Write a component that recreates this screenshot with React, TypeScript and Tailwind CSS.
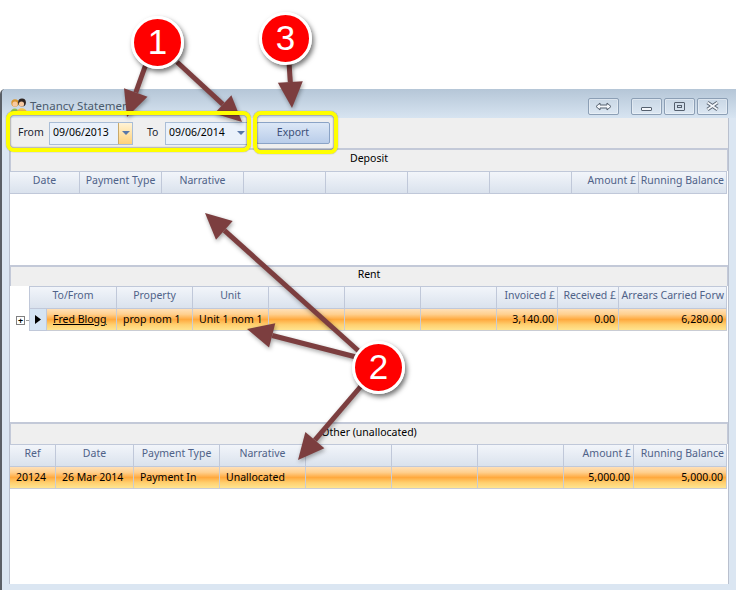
const headBg = "bg-[linear-gradient(#f2f5fa,#dae2ed)]";
const rowBg = "bg-[linear-gradient(#ffe0b8,#ffd08f_25%,#ffa93e_50%,#ffd070_75%,#ffe48f)]";

type Col = { w: string; headW?: string; label: string; value?: string; align?: string };

const deposit: Col[] = [
  { w: "w-[70px]", label: "Date" },
  { w: "w-[82px]", label: "Payment Type" },
  { w: "w-[82px]", label: "Narrative" },
  { w: "w-[82px]", label: "" },
  { w: "w-[82px]", label: "" },
  { w: "w-[82px]", label: "" },
  { w: "w-[82px]", label: "" },
  { w: "w-[67px]", label: "Amount £", align: "right" },
  { w: "w-[88px]", label: "Running Balance", align: "right" },
];

const rent: Col[] = [
  { w: "w-[70px]", headW: "w-[88px]", label: "To/From", value: "Fred Blogg", align: "link" },
  { w: "w-[76px]", label: "Property", value: "prop nom 1" },
  { w: "w-[76px]", label: "Unit", value: "Unit 1 nom 1" },
  { w: "w-[76px]", label: "" },
  { w: "w-[76px]", label: "" },
  { w: "w-[76px]", label: "" },
  { w: "w-[61px]", label: "Invoiced £", value: "3,140.00", align: "right" },
  { w: "w-[61px]", label: "Received £", value: "0.00", align: "right" },
  { w: "w-[108px]", label: "Arrears Carried Forw", value: "6,280.00", align: "right" },
];

const other: Col[] = [
  { w: "w-[46px]", label: "Ref", value: "20124" },
  { w: "w-[78px]", label: "Date", value: "26 Mar 2014" },
  { w: "w-[86px]", label: "Payment Type", value: "Payment In" },
  { w: "w-[86px]", label: "Narrative", value: "Unallocated" },
  { w: "w-[86px]", label: "" },
  { w: "w-[86px]", label: "" },
  { w: "w-[86px]", label: "" },
  { w: "w-[70px]", label: "Amount £", value: "5,000.00", align: "right" },
  { w: "w-[93px]", label: "Running Balance", value: "5,000.00", align: "right" },
];

const Section = ({ title, titleH, cols, hasRow, expander, body }: { title: string; titleH: string; cols: Col[]; hasRow?: boolean; expander?: boolean; body: string }) => (
  <div className="flex flex-col">
    <div className={`${titleH} bg-[#efefef] border-t-2 border-x border-[#c3c9d8] flex items-center justify-center pb-[3px] text-black`}>{title}</div>
    <div className="flex h-[23px]">
      {expander && <div className="w-[19px] bg-white" />}
      {cols.map((c, i) => (
        <div
          key={i}
          className={`${c.headW ?? c.w} ${headBg} border-y border-r border-[#c0c8d9] ${c.headW ? "border-l" : ""} flex items-center px-[2px] pb-[3px] text-[#4f6288] whitespace-nowrap ${c.align === "right" ? "justify-end" : "justify-center"}`}
        >
          {c.label}
        </div>
      ))}
    </div>
    {hasRow && (
      <div className="flex h-[22px]">
        {expander && (
          <div className="w-[19px] bg-white flex items-center justify-end pr-[1px] gap-[1px]">
            <div className="w-[9px] h-[9px] border border-[#808080] flex items-center justify-center text-black text-[9px] leading-none font-bold">+</div>
            <div className="w-[2px] border-t border-dotted border-[#999]" />
          </div>
        )}
        {expander && (
          <div className="w-[18px] bg-[#d5e4f3] border-b border-x border-[#c0c8d9] flex items-center justify-center">
            <svg width="6" height="9" viewBox="0 0 6 9"><path d="M0 0 L6 4.5 L0 9 Z" fill="#000" /></svg>
          </div>
        )}
        {cols.map((c, i) => (
          <div
            key={i}
            className={`${c.w} ${rowBg} border-b border-r border-[#c9ccd4] flex items-center pt-[1px] text-black whitespace-nowrap ${c.align === "right" ? "justify-end pr-[3px]" : "justify-start pl-[6px]"} ${c.align === "link" ? "underline" : ""}`}
          >
            {c.value}
          </div>
        ))}
      </div>
    )}
    <div className={`${body} bg-white`} />
  </div>
);

const WinBtn = ({ w, children }: { w: string; children: React.ReactNode }) => (
  <div className={`${w} h-[17px] rounded-[2px] border border-[#8c9fb5] bg-[linear-gradient(#c9d7e5,#dce7f2)] shadow-[inset_0_0_0_1px_rgba(255,255,255,0.35)] flex items-center justify-center`}>{children}</div>
);

// arrow with a filled head, tip at x2,y2
const Arrow = ({ x1, y1, x2, y2 }: { x1: number; y1: number; x2: number; y2: number }) => {
  const len = Math.hypot(x2 - x1, y2 - y1);
  const ux = (x2 - x1) / len;
  const uy = (y2 - y1) / len;
  const bx = x2 - ux * 26;
  const by = y2 - uy * 26;
  const pts = `${x2},${y2} ${bx - uy * 12.5},${by + ux * 12.5} ${bx + uy * 12.5},${by - ux * 12.5}`;
  return (
    <g>
      <line x1={x1} y1={y1} x2={bx} y2={by} stroke="#7c3e3f" strokeWidth="5" />
      <polygon points={pts} fill="#7c3e3f" />
    </g>
  );
};

const Badge = ({ n, pos }: { n: string; pos: string }) => (
  <div className={`absolute ${pos} w-[53px] h-[53px] rounded-full border-[3px] border-white bg-[radial-gradient(circle_at_50%_40%,#ff0000_70%,#d80000)] shadow-[2px_3px_5px_rgba(0,0,0,0.55)] flex items-center justify-center pb-[3px] text-white text-[35px] leading-none font-['Liberation_Sans',sans-serif]`}>
    {n}
  </div>
);

export default function App() {
  return (
    <div className="relative w-[736px] h-[590px] bg-white overflow-hidden pt-[89px] text-[10.5px] font-['Noto_Sans','Liberation_Sans',sans-serif]">
      <div className="h-[501px] flex flex-col rounded-tl-[5px] border-l-2 border-[#5a5f66] bg-[#dbe6f2]">
        {/* title bar */}
        <div className="h-[29px] pl-[8px] pr-[8px] flex items-center rounded-tl-[4px] bg-[linear-gradient(#b5c6d7,#d7e4f1)]">
          <svg width="18" height="16" viewBox="0 0 18 16" className="mr-[2px] mt-[5px]">
            <path d="M0.500 15 C0.500 9 9 9 9 15 Z" fill="#8fbf52" />
            <path d="M6.500 15 C6.500 8.500 17 8.500 17 15 Z" fill="#f3c14d" />
            <circle cx="5" cy="5" r="3.700" fill="#d9962f" />
            <circle cx="5" cy="6" r="2.600" fill="#f7c9a0" />
            <circle cx="12" cy="4.500" r="3.900" fill="#2f2420" />
            <circle cx="11.500" cy="6" r="2.600" fill="#f7c9a0" />
          </svg>
          <span className="text-[11.5px] text-[#4a5a6c] mt-[5px]">Tenancy Statement</span>
          <div className="ml-auto flex mt-[5px]">
            <WinBtn w="w-[31px]">
              <svg width="17" height="9" viewBox="0 0 17 9"><path d="M1 4.500 L5 1 V3 H12 V1 L16 4.500 L12 8 V6 H5 V8 Z" fill="#f4f7fb" stroke="#55606e" /></svg>
            </WinBtn>
            <div className="w-[12px]" />
            <WinBtn w="w-[31px]"><div className="w-[11px] h-[4px] mt-[5px] rounded-[1px] border border-[#55606e] bg-[#f4f7fb]" /></WinBtn>
            <div className="w-[2px]" />
            <WinBtn w="w-[31px]"><div className="w-[11px] h-[9px] rounded-[1px] border border-[#55606e] flex items-center justify-center"><div className="w-[5px] h-[3px] border border-[#55606e]" /></div></WinBtn>
            <div className="w-[2px]" />
            <WinBtn w="w-[31px]">
              <svg width="13" height="10" viewBox="0 0 13 10"><path d="M1.500 1.500 L11.500 8.500 M11.500 1.500 L1.500 8.500" stroke="#55606e" strokeWidth="3.500" /><path d="M1.500 1.500 L11.500 8.500 M11.500 1.500 L1.500 8.500" stroke="#f4f7fb" strokeWidth="1.800" /></svg>
            </WinBtn>
          </div>
        </div>

        <div className="flex flex-1 pl-[7px] pr-[7px] pb-[6px]">
          <div className="w-[720px] flex flex-col bg-white border-l border-r border-[#b9c0ce]">
            {/* toolbar */}
            <div className="h-[30px] bg-[#efefef] flex items-center pl-[8px] text-[#1c2430]">
              <span className="w-[31px]">From</span>
              <div className="w-[84px] h-[23px] border border-[#a9bdd6] bg-[#eaf1fa] flex items-center text-black">
                <span className="pl-[3px] flex-1">09/06/2013</span>
                <div className="w-[14px] h-full border-l border-[#c9a96a] bg-[linear-gradient(#fff3d6,#ffd27a)] flex items-center justify-center">
                  <div className="w-0 h-0 border-x-[4px] border-x-transparent border-t-[4px] border-t-[#5a78a8]" />
                </div>
              </div>
              <span className="ml-[14px] w-[18px]">To</span>
              <div className="w-[84px] h-[23px] border border-[#a9bdd6] bg-[#eaf1fa] flex items-center text-black">
                <span className="pl-[3px] flex-1">09/06/2014</span>
                <div className="w-[14px] h-full flex items-center justify-center">
                  <div className="w-0 h-0 border-x-[4px] border-x-transparent border-t-[4px] border-t-[#5a78a8]" />
                </div>
              </div>
              <div className="ml-[7px] mb-[1px] w-[74px] h-[22px] rounded-[2px] border border-[#8aa3c6] bg-[linear-gradient(#dce7f6,#b9cdea)] flex items-center justify-center text-[#3b4f78]">Export</div>
            </div>
            <Section title="Deposit" titleH="h-[23px]" cols={deposit} body="h-[71px]" />
            <Section title="Rent" titleH="h-[21px]" cols={rent} hasRow expander body="h-[91px]" />
            <Section title="Other (unallocated)" titleH="h-[22px]" cols={other} hasRow body="flex-1" />
          </div>
        </div>
      </div>

      {/* annotations */}
      <svg width="736" height="590" className="absolute inset-0 drop-shadow-[1px_2px_2px_rgba(0,0,0,0.35)]">
        <Arrow x1={146} y1={64} x2={127} y2={117} />
        <Arrow x1={177} y1={62} x2={242} y2={122} />
        <Arrow x1={289} y1={62} x2={292} y2={108} />
        <Arrow x1={362} y1={354} x2={205} y2={213} />
        <Arrow x1={360} y1={358} x2={247} y2={329} />
        <Arrow x1={362} y1={385} x2={298} y2={460} />
      </svg>
      <div className="absolute left-[6px] top-[111px] w-[245px] h-[41px] rounded-[8px] border-[4px] border-[#ffff00] shadow-[0_0_1px_rgba(0,0,0,0.6),inset_0_0_2px_rgba(0,0,0,0.8)]" />
      <div className="absolute left-[253px] top-[111px] w-[85px] h-[43px] rounded-[8px] border-[4px] border-[#ffff00] shadow-[0_0_1px_rgba(0,0,0,0.6),inset_0_0_2px_rgba(0,0,0,0.8)]" />
      <Badge n="1" pos="left-[131px] top-[16px]" />
      <Badge n="3" pos="left-[259px] top-[12px]" />
      <Badge n="2" pos="left-[352px] top-[341px]" />
    </div>
  );
}
